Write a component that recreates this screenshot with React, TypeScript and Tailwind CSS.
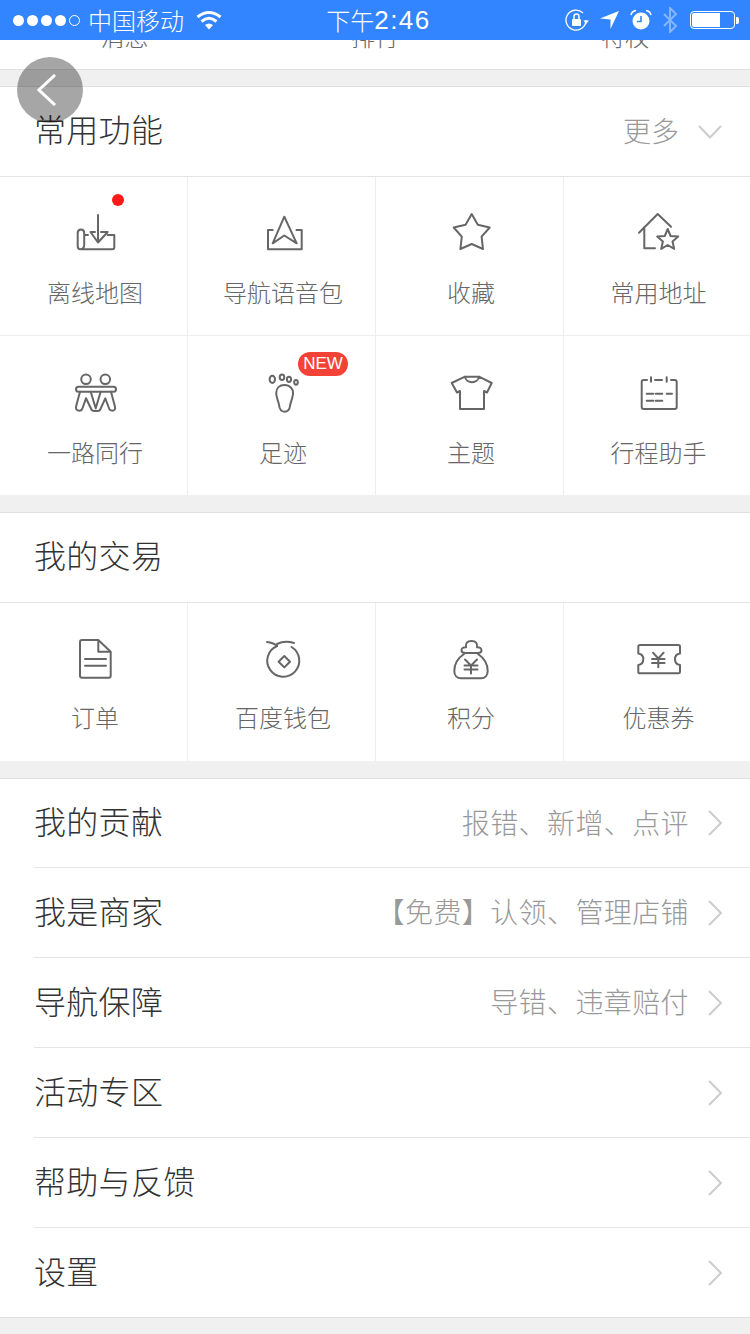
import type { ReactNode } from "react";

const Ico = ({ children }: { children: ReactNode }) => (
  <svg
    width="48"
    height="48"
    viewBox="0 0 48 48"
    fill="none"
    stroke="#666"
    strokeWidth="2"
    strokeLinecap="round"
    strokeLinejoin="round"
  >
    {children}
  </svg>
);

const icons = {
  offline: (
    <Ico>
      <path d="M27 6V33M19.5 23L27 33.5L36.7 23M19.5 23H24M30 23H36.7" />
      <path d="M36.7 26H43.3V38.3Q43.3 40.3 41.3 40.3H9.5Q6.7 40.3 6.7 37V24Q6.7 20.5 10 20.5Q13.2 20.5 13.2 24V36Q13.2 39.5 9.5 40.3M13.2 26H17" />
    </Ico>
  ),
  voice: (
    <Ico>
      <path d="M13.7 21H9V40.3H42.7V21H37.5" />
      <path d="M25.3 7.7L13.7 34.3L25.3 26.5L37.7 34.3Z" />
    </Ico>
  ),
  star: (
    <Ico>
      <path d="M24.7 5L30.8 15.8L42.7 18.5L34.6 27.6L36 40L24.7 35L13.4 40L14.8 27.6L6.7 18.5L18.6 15.8Z" />
    </Ico>
  ),
  homeStar: (
    <Ico>
      <path d="M4 23.7L22.7 5L36 17.7M9.3 18V39.3H20" />
      <path d="M32.7 20L35.6 27L43.2 27.6L37.5 32.5L39.2 39.9L32.7 36L26.2 39.9L27.9 32.5L22.2 27.6L29.8 27Z" />
    </Ico>
  ),
  together: (
    <Ico>
      <circle cx="15" cy="10.3" r="4.8" />
      <circle cx="34.3" cy="10.3" r="4.8" />
      <rect x="5" y="17.7" width="40" height="5" rx="2.5" />
      <path d="M9 22.7L5 37.7Q4.6 41.7 8.5 41.7Q10.5 41.7 11.2 40L15 29.3L20.7 41Q22.5 42.5 24.7 41.7Q27.5 42.5 29 41L34.3 29.3L38.5 40.5Q40 41.7 41.5 41.7Q44.8 41.3 44 37.7L40 22.7" />
      <path d="M19.7 22.7L24.7 39.3L29.7 22.7" />
    </Ico>
  ),
  foot: (
    <Ico>
      <ellipse cx="13.3" cy="10.3" rx="2.7" ry="3.6" />
      <ellipse cx="23" cy="8.3" rx="2.3" ry="2.8" />
      <ellipse cx="30" cy="10.3" rx="2.1" ry="2.6" />
      <ellipse cx="37" cy="13.3" rx="1.8" ry="2.4" />
      <path d="M25.5 16C31 16 34.5 20 34 25C33.5 30 31.5 33 31 37C30.5 41 28 42.7 25.5 42.7C22 42.7 20.5 40 20 36C19.5 32 17.2 29 17.2 24C17.2 19 20.5 16 25.5 16Z" />
    </Ico>
  ),
  shirt: (
    <Ico>
      <path d="M18 7.7L4.7 14L10 23.5L13 22V40H37V22L40 23.5L44.7 14L32 7.7C31 15 19 15 18 7.7Z" />
      <path d="M18 7.7H32" />
    </Ico>
  ),
  calendar: (
    <Ico>
      <path d="M12 11H8.7Q6.7 11 6.7 13V38Q6.7 40 8.7 40H39.7Q41.7 40 41.7 38V13Q41.7 11 39.7 11H36M20 11H27M16 8.3V12.7M31.7 8.3V12.7" />
      <path d="M11.7 24.8H18.3M20.7 24.8H27.3M31.7 24.8H37M11.7 31.7H18.3M20.7 31.7H27.3" />
    </Ico>
  ),
  order: (
    <Ico>
      <path d="M11 6H27.3L39.7 17.7V41.7Q39.7 43.7 37.7 43.7H11Q9 43.7 9 41.7V8Q9 6 11 6Z" />
      <path d="M27.3 6.5V17.7H39M14 25H35M14 31.7H35" />
    </Ico>
  ),
  wallet: (
    <Ico>
      <path d="M18 12A16 16 0 1 0 32.5 13" />
      <path d="M8 8Q14 8.5 18 12M18 10Q26 6 35 9" />
      <path d="M25.3 22L31 27.7L25.3 33.4L19.6 27.7Z" />
    </Ico>
  ),
  points: (
    <Ico>
      <path d="M18 19H31Q34.5 19 34.5 16.2Q34.5 13.2 30 13.3Q31 7 24.5 7Q18 7 19 13.3Q14.5 13.2 14.5 16.2Q14.5 19 18 19Z" />
      <path d="M17 20C11 24 7.3 30 7.3 37C7.3 41.5 10 44.3 14 44.3H34C38 44.3 40.7 41.5 40.7 37C40.7 30 37 24 31 20" />
      <path d="M18 25.5L24 31.5L30 25.5M17.5 31.5H30.5M17.5 35.5H30.5M24 31.5V39.5" />
    </Ico>
  ),
  coupon: (
    <Ico>
      <path d="M5 11H43.5Q45 11 45 12.5V19.5Q40 20 40 25.3Q40 30.5 45 31V38Q45 39.3 43.5 39.3H5Q3.3 39.3 3.3 38V31Q8.3 30.5 8.3 25.3Q8.3 20 3.3 19.5V12.5Q3.3 11 5 11Z" />
      <path d="M18 18.7L23.3 24.5L28.6 18.7M17 25H29.6M17 29H29.6M23.3 24.5V33.3" />
    </Ico>
  ),
};

const Chevron = () => (
  <svg width="16" height="26" viewBox="0 0 16 26" fill="none" stroke="#ccc" strokeWidth="2">
    <path d="M2 1L14 13L2 25" />
  </svg>
);

type Cell = { icon: ReactNode; label: string; badge?: "dot" | "new" };

const Grid = ({ cells, pt, h, last }: { cells: Cell[]; pt: string; h: string; last?: boolean }) => (
  <div className={`grid grid-cols-[188px_188px_188px_186px] ${last ? "" : "border-b border-[#eee]"}`}>
    {cells.map((c, i) => (
      <div
        key={c.label}
        className={`relative flex flex-col items-center pl-[3px] ${pt} ${h} ${i < 3 ? "border-r border-[#eee]" : ""}`}
      >
        {c.icon}
        <div className="mt-[18px] text-[24px] leading-[34px] text-[#666] font-light">{c.label}</div>
        {c.badge === "dot" && (
          <span className="absolute left-[112px] top-[17px] h-3 w-3 rounded-full bg-[#ff1a1a]" />
        )}
        {c.badge === "new" && (
          <span className="absolute left-[110px] top-[16px] flex h-6 w-[50px] items-center justify-center rounded-full bg-[#f44336] font-['Liberation_Sans',sans-serif] text-[17px] text-white">
            NEW
          </span>
        )}
      </div>
    ))}
  </div>
);

const rows = [
  { title: "我的贡献", sub: "报错、新增、点评" },
  { title: "我是商家", sub: "【免费】认领、管理店铺" },
  { title: "导航保障", sub: "导错、违章赔付" },
  { title: "活动专区", sub: "" },
  { title: "帮助与反馈", sub: "" },
  { title: "设置", sub: "" },
];

const StatusBar = () => (
  <div className="grid h-10 grid-cols-3 items-center bg-[#3385ff] pl-[13px] pr-[11px] text-white">
    <div className="flex items-center">
      <div className="flex gap-[3px]">
        {[0, 1, 2, 3].map((d) => (
          <span key={d} className="h-[11px] w-[11px] rounded-full bg-white" />
        ))}
        <span className="h-[11px] w-[11px] rounded-full border border-white" />
      </div>
      <span className="ml-[8px] whitespace-nowrap text-[24px] font-light leading-none">中国移动</span>
      <svg className="ml-[12px] shrink-0" width="26" height="20" viewBox="0 0 26 20" fill="none" stroke="#fff" strokeWidth="3">
        <path d="M1.5 7Q13 -2 24.5 7M5.5 11.5Q13 5 20.5 11.5" />
        <path d="M9 15Q13 12 17 15L13 19.5Z" fill="#fff" stroke="none" />
      </svg>
    </div>
    <div className="flex items-center justify-center whitespace-nowrap pl-[5px] leading-none">
      <span className="text-[24px] font-light">下午</span>
      <span className="font-['Liberation_Sans',sans-serif] text-[26px] font-medium tracking-[1.5px]">2:46</span>
    </div>
    <div className="flex items-center justify-end">
      <svg width="24" height="24" viewBox="0 0 24 24" fill="none" stroke="#fff" strokeWidth="1.3">
        <path d="M21 12A10 10 0 1 1 18 5" />
        <path d="M18.5 12.5L24 12.5L21 16Z" fill="#fff" stroke="none" />
        <rect x="7" y="11" width="9" height="7" rx="1" fill="#fff" stroke="none" />
        <path d="M9 11V8.5A2.5 2.5 0 0 1 14 8.5V11" strokeWidth="1.5" />
      </svg>
      <svg className="ml-[11px]" width="19" height="18" viewBox="0 0 19 18" fill="#fff">
        <path d="M19 0L10.5 18V8.5L0 7.5Z" />
      </svg>
      <svg className="ml-[11px]" width="22" height="22" viewBox="0 0 22 22" fill="#fff">
        <circle cx="11" cy="12" r="8.5" />
        <path d="M11 7V12.5H7" stroke="#3385ff" strokeWidth="1.6" fill="none" />
        <path d="M1 6Q2 2 6 1.5M21 6Q20 2 16 1.5" stroke="#fff" strokeWidth="1.6" fill="none" />
      </svg>
      <svg className="ml-[10px]" width="16" height="26" viewBox="0 0 16 26" fill="none" stroke="#fff" strokeOpacity="0.4" strokeWidth="2">
        <path d="M2 7L14 19L8 25V1L14 7L2 19" />
      </svg>
      <div className="ml-[12px] flex items-center">
        <div className="h-[18px] w-[45px] rounded-[4px] border border-white p-[1px]">
          <div className="h-full w-[28px] rounded-l-[2px] bg-white" />
        </div>
        <div className="ml-[1px] h-[7px] w-[3px] rounded-r-[2px] bg-white" />
      </div>
    </div>
  </div>
);

export default function App() {
  return (
    <div className="relative h-[1334px] w-[750px] overflow-hidden bg-[#f0f0f0] font-['Noto_Sans_CJK_SC','Liberation_Sans',sans-serif]">
      <StatusBar />

      <div className="h-[30px] overflow-hidden border-b border-[#e0e0e0] bg-white">
        <div className="-mt-[21px] grid grid-cols-3 text-center text-[24px] leading-[34px] text-[#666] font-light">
          <div className="pr-[1px]">消息</div>
          <div>排行</div>
          <div>特权</div>
        </div>
      </div>

      <section className="mt-4 border-t border-[#e0e0e0] bg-white">
        <div className="flex h-[90px] items-center justify-between border-b border-[#e4e4e4] pl-[34px] pr-[28px]">
          <span className="pb-[8px] text-[32px] font-light leading-[44px] tracking-[0.3px] text-[#333]">常用功能</span>
          <div className="flex items-center">
            <span className="pb-[3px] text-[28px] font-light leading-[40px] text-[#999]">更多</span>
            <svg className="ml-[19px]" width="24" height="14" viewBox="0 0 24 14" fill="none" stroke="#ccc" strokeWidth="2">
              <path d="M1 1L12 12.5L23 1" />
            </svg>
          </div>
        </div>
        <Grid
          pt="pt-[32px]"
          h="h-[158px]"
          cells={[
            { icon: icons.offline, label: "离线地图", badge: "dot" },
            { icon: icons.voice, label: "导航语音包" },
            { icon: icons.star, label: "收藏" },
            { icon: icons.homeStar, label: "常用地址" },
          ]}
        />
        <Grid
          last
          pt="pt-[33px]"
          h="h-[159px]"
          cells={[
            { icon: icons.together, label: "一路同行" },
            { icon: icons.foot, label: "足迹", badge: "new" },
            { icon: icons.shirt, label: "主题" },
            { icon: icons.calendar, label: "行程助手" },
          ]}
        />
      </section>

      <section className="mt-[17px] border-t border-[#e0e0e0] bg-white">
        <div className="flex h-[90px] items-center border-b border-[#e4e4e4] pl-[34px]">
          <span className="pb-[8px] text-[32px] font-light leading-[44px] tracking-[0.3px] text-[#333]">我的交易</span>
        </div>
        <Grid
          last
          pt="pt-[31px]"
          h="h-[158px]"
          cells={[
            { icon: icons.order, label: "订单" },
            { icon: icons.wallet, label: "百度钱包" },
            { icon: icons.points, label: "积分" },
            { icon: icons.coupon, label: "优惠券" },
          ]}
        />
      </section>

      <section className="mt-[17px] border-y border-[#e0e0e0] bg-white">
        {rows.map((r, i) => (
          <div key={r.title} className="pl-[34px]">
            <div
              className={`flex items-center justify-between pr-[27px] ${i === 0 ? "h-[88px]" : "h-[89px]"} ${
                i < rows.length - 1 ? "box-content border-b border-[#e4e4e4]" : ""
              }`}
            >
              <span className="pb-[6px] text-[32px] font-light leading-[44px] tracking-[0.3px] text-[#333]">{r.title}</span>
              <div className="flex items-center">
                <span className="pb-[3px] text-[28px] font-light leading-[40px] tracking-[0.4px] text-[#999]">{r.sub}</span>
                <span className="ml-[18px]">
                  <Chevron />
                </span>
              </div>
            </div>
          </div>
        ))}
      </section>

      <button className="absolute left-[17px] top-[57px] flex h-[66px] w-[66px] items-center justify-center rounded-full bg-black/35">
        <svg className="mr-[7px]" width="20" height="32" viewBox="0 0 20 32" fill="none" stroke="#fff" strokeWidth="3">
          <path d="M18 1L2 16L18 31" />
        </svg>
      </button>
    </div>
  );
}
